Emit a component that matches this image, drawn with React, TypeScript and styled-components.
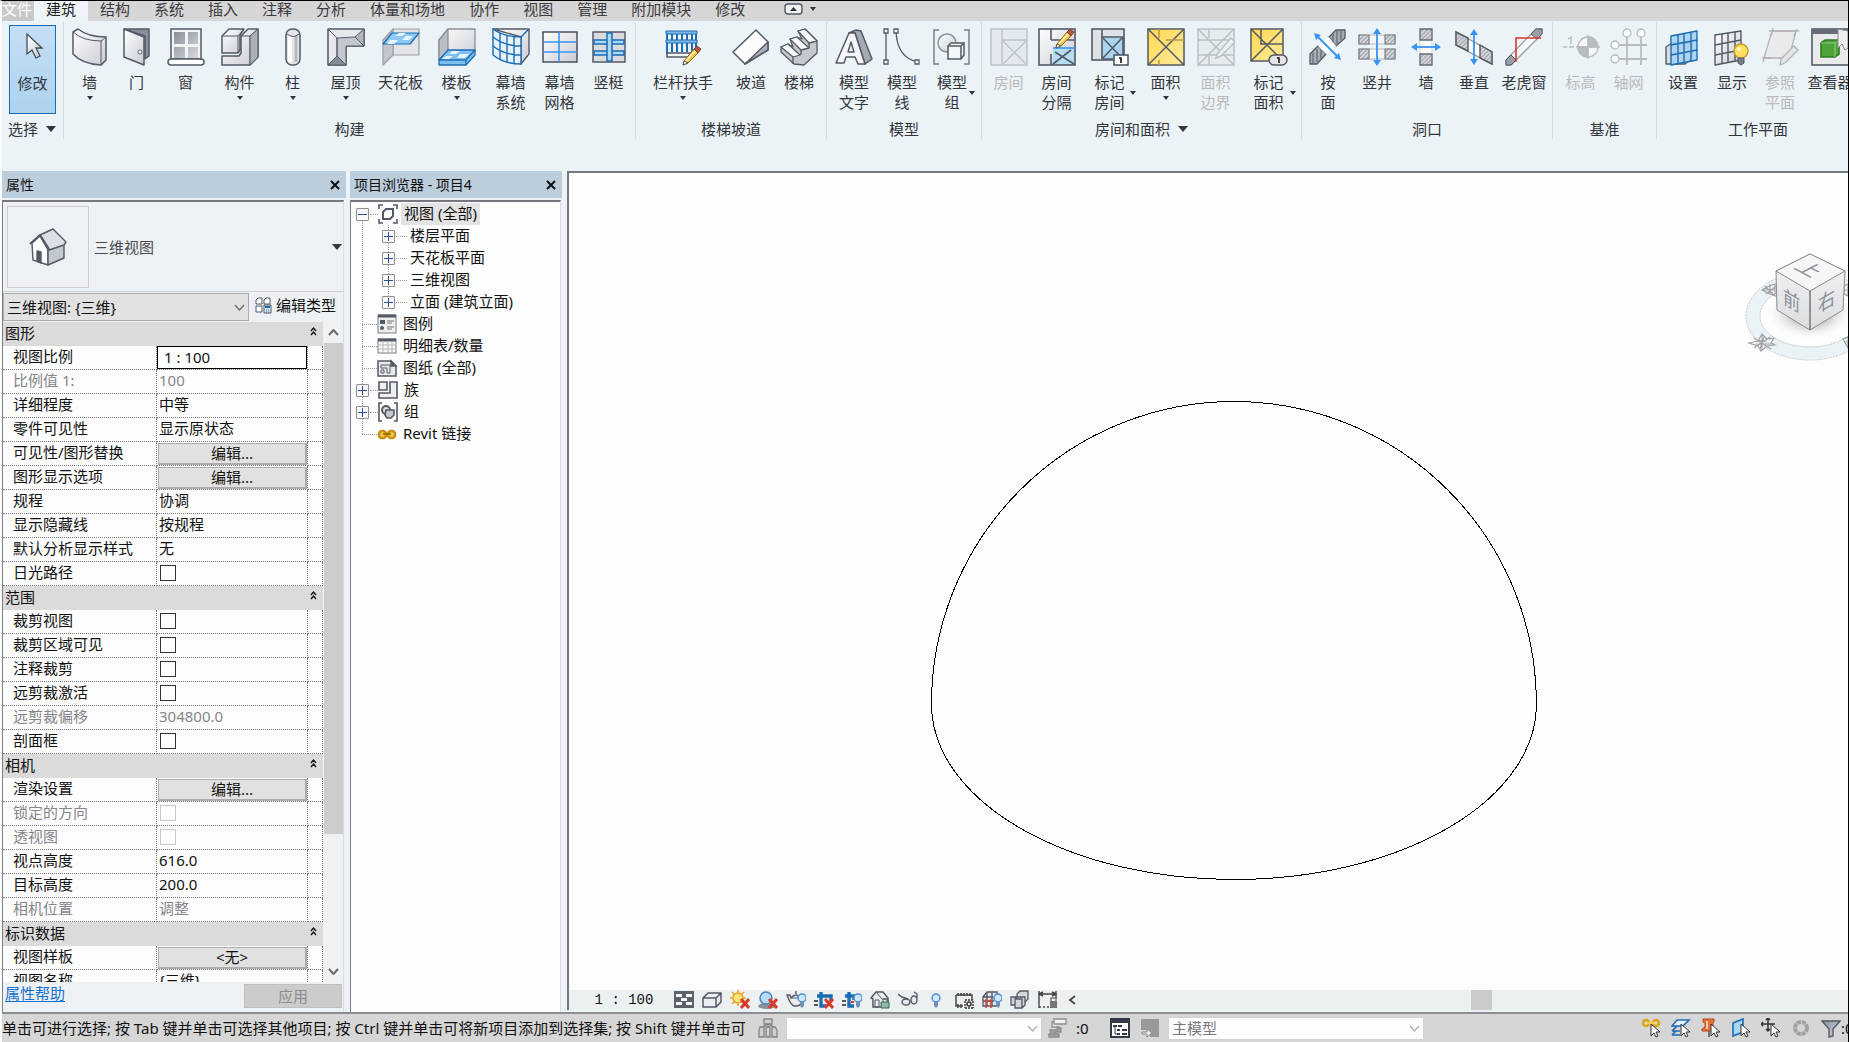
import React, { ReactNode } from 'react';
import styled, { createGlobalStyle, css } from 'styled-components';

const ink = '#535a66';
const blue = '#1c6cb4';
const sky = '#3794f5';

const GlobalStyle = createGlobalStyle`
  *, *::before, *::after { box-sizing: border-box; }
  html, body { margin: 0; padding: 0; }
  body, button, input, select {
    font-family: "Noto Sans", "Noto Sans CJK SC", sans-serif;
    font-size: 15px;
    line-height: 20px;
    color: #111;
  }
  button { margin: 0; padding: 0; border: 0; background: none; }
  svg { display: block; }
`;

/* ---------- shell ---------- */

const Shell = styled.div`
  display: flex;
  flex-direction: column;
  height: 100vh;
  overflow: hidden;
  border-top: 1px solid #000;
  border-right: 1px solid #000;
  border-left: 2px solid #fdfdfd;
  background: #ecf2f5;
  white-space: nowrap;
`;

const TabBar = styled.nav`
  display: flex;
  flex: none;
  height: 20px;
  background: #d6d6d6;
`;

const Tab = styled.button<{ $kind?: 'active' | 'file' }>`
  flex: none;
  padding: 0 12px 4px;
  height: 20px;
  line-height: 16px;
  color: #3a3a40;
  ${p => p.$kind === 'active' && css`background: #eef4f7; color: #222;`}
  ${p => p.$kind === 'file' && css`background: #c9c9c9; color: #fff; padding-left: 0; padding-right: 2px;`}
`;

const TabToggle = styled.button`
  display: flex;
  align-items: center;
  gap: 7px;
  height: 16px;
  margin-left: 27px;
`;

/* ---------- ribbon ---------- */

const Ribbon = styled.div`
  display: flex;
  flex: none;
  height: 150px;
  padding-top: 1px;
  background: #ebf3f6;
  overflow: hidden;
`;

const Panel = styled.section<{ $width: number }>`
  display: flex;
  flex-direction: column;
  flex: none;
  width: ${p => p.$width}px;
  height: 117px;
  border-right: 1px solid #d9dadd;
  &:last-child { border-right: 0; }
`;

const Tools = styled.div`
  display: flex;
  flex: 1;
  justify-content: center;
`;

const Tool = styled.button<{ $width: number; $off?: boolean }>`
  position: relative;
  display: flex;
  flex: none;
  flex-direction: column;
  align-items: center;
  width: ${p => p.$width}px;
  padding-top: 6px;
  color: ${p => (p.$off ? '#b9b9bd' : '#33353c')};
  svg { flex: none; }
`;

const ModifyTool = styled(Tool)`
  height: 89px;
  margin-top: 3px;
  padding-top: 3px;
  border: 1px solid #1c69b4;
  background: linear-gradient(#c5def5, #b9d9f2 50%, #add2ee);
`;

const ToolLabel = styled.span<{ $lines: number }>`
  height: ${p => p.$lines * 20}px;
  margin: 6px 0 4px;
  white-space: pre;
  text-align: center;
`;

const Caret = styled.i<{ $size?: number }>`
  display: block;
  flex: none;
  width: 0;
  height: 0;
  border: solid transparent;
  border-width: ${p => p.$size ?? 3}px;
  border-top-color: #33353c;
  border-bottom: 0;
  border-top-width: ${p => (p.$size ?? 3) + 1}px;
`;

const SideCaret = styled(Caret)`
  position: absolute;
  right: 3px;
  top: 69px;
`;

const PanelTitle = styled.div<{ $start?: boolean }>`
  display: flex;
  flex: none;
  align-items: center;
  justify-content: ${p => (p.$start ? 'flex-start' : 'center')};
  gap: 8px;
  height: 20px;
  padding-left: ${p => (p.$start ? 6 : 0)}px;
  color: #33353c;
`;

/* ---------- docked panes ---------- */

const Work = styled.main`
  display: flex;
  flex: 1;
  min-height: 0;
`;

const Dock = styled.section<{ $width: number; $gap: number }>`
  display: flex;
  flex-direction: column;
  flex: none;
  width: ${p => p.$width}px;
  margin-right: ${p => p.$gap}px;
`;

const DockTitle = styled.header`
  display: flex;
  flex: none;
  align-items: center;
  justify-content: space-between;
  height: 27px;
  margin-bottom: 2px;
  padding: 0 6px 0 4px;
  background: #bccddc;
  font-size: 14px;
`;

const DockBody = styled.div<{ $white?: boolean }>`
  display: flex;
  flex-direction: column;
  flex: 1;
  min-height: 0;
  margin-right: ${p => (p.$white ? 1 : 2)}px;
  border-top: 2px solid #74777c;
  border-left: 1px solid #7c7f84;
  border-right: 1px solid #dcdcdc;
  background: ${p => (p.$white ? '#fdfdfd' : '#eef1f3')};
`;

const TypeRow = styled.button`
  display: flex;
  flex: none;
  align-items: center;
  height: 90px;
  padding: 0 1px 0 4px;
  border-bottom: 1px solid #cfcfd4;
  text-align: left;
  color: #4a4a50;
`;

const TypeThumb = styled.span`
  display: grid;
  place-items: center;
  width: 82px;
  height: 82px;
  margin-right: 5px;
  border: 1px solid #cbcbd0;
`;

const Grow = styled.span`
  flex: 1;
`;

const InstanceRow = styled.div`
  display: flex;
  flex: none;
  align-items: center;
  gap: 6px;
  height: 30px;
`;

const Picker = styled.div<{ $width: number; $height: number; $tone: 'gray' | 'white' }>`
  position: relative;
  flex: none;
  width: ${p => p.$width}px;
  height: ${p => p.$height}px;
  select {
    appearance: none;
    width: 100%;
    height: 100%;
    padding: 0 3px;
    border: 1px solid ${p => (p.$tone === 'gray' ? '#acacac' : '#d2d2d2')};
    border-radius: 0;
    background: ${p => (p.$tone === 'gray' ? '#e2e2e2' : '#fdfdfd')};
    color: ${p => (p.$tone === 'gray' ? '#111' : '#77777c')};
    opacity: 1;
  }
  svg {
    position: absolute;
    right: 4px;
    top: 50%;
    margin-top: -3px;
    pointer-events: none;
  }
`;

const EditType = styled.button`
  display: flex;
  align-items: center;
  gap: 4px;
  padding-bottom: 4px;
`;

const GridArea = styled.div`
  display: flex;
  flex: 1;
  min-height: 0;
`;

const TableClip = styled.div`
  flex: none;
  width: 320px;
  overflow: hidden;
  background: #fdfdfd;
`;

const PropTable = styled.table`
  width: 320px;
  table-layout: fixed;
  border-collapse: separate;
  border-spacing: 0;
  tr { height: 24px; }
  td, th {
    height: 24px;
    padding: 0;
    font-weight: normal;
    text-align: left;
    line-height: 18px;
    vertical-align: middle;
    overflow: hidden;
  }
`;

const GroupHead = styled.th`
  background: #dbdbdb;
  div {
    display: flex;
    justify-content: space-between;
    align-items: center;
    padding: 0 5px 2px 2px;
  }
`;

const NameCell = styled.th<{ $off?: boolean }>`
  && { padding-left: 10px; padding-bottom: 4px; }
  border-right: 1px dotted #777;
  border-bottom: 1px dotted #777;
  color: ${p => (p.$off ? '#85858a' : '#111')};
`;

const cellBottom = { text: 4, check: 2, input: 0, button: 0 };

const ValueCell = styled.td<{ $off?: boolean; $kind: keyof typeof cellBottom }>`
  && {
    padding-left: ${p => (p.$kind === 'text' ? 2 : 0)}px;
    padding-bottom: ${p => cellBottom[p.$kind]}px;
  }
  border-right: 1px dotted #777;
  border-bottom: 1px dotted #777;
  color: ${p => (p.$off ? '#85858a' : '#111')};
`;

const LinkCell = styled.td`
  border-right: 1px dotted #777;
  border-bottom: 1px dotted #777;
`;

const ScaleInput = styled.input`
  display: block;
  width: 100%;
  height: 23px;
  padding: 0 6px 2px;
  border: 1px solid #000;
  background: #fff;
`;

const CellButton = styled.button`
  display: block;
  width: 149px;
  height: 22px;
  margin-left: 1px;
  border: 1px solid #acacac;
  border-right-width: 2px;
  border-bottom-width: 2px;
  background: #e1e1e1;
  line-height: 18px;
`;

const Tick = styled.input`
  appearance: none;
  display: block;
  width: 16px;
  height: 16px;
  margin: 0 0 0 3px;
  border: 1px solid #333;
  background: #fff;
  &:disabled { border-color: #c8c8c8; }
`;

const Scroll = styled.div`
  display: flex;
  flex: 1;
  flex-direction: column;
  align-items: center;
  justify-content: space-between;
  background: #f0f1f2;
`;

const ScrollButton = styled.button`
  display: grid;
  place-items: center;
  width: 20px;
  height: 21px;
`;

const ScrollTrack = styled.div`
  display: flex;
  flex: 1;
  flex-direction: column;
  width: 19px;
  &::before { content: ''; flex: 31; background: #cdcdcd; }
  &::after { content: ''; flex: 8; }
`;

const DockFoot = styled.footer`
  display: flex;
  flex: none;
  align-items: flex-start;
  justify-content: space-between;
  height: 30px;
  padding: 2px 1px 0 2px;
  background: #eef1f3;
  line-height: 18px;
  a { color: #1270d4; text-underline-offset: 2px; }
`;

const Apply = styled.button`
  width: 98px;
  height: 24px;
  border: 1px solid #c0c0c0;
  background: #cccccc;
  color: #8a8a8e;
`;

/* ---------- project browser ---------- */

const Branch = styled.ul<{ $nested?: boolean }>`
  position: relative;
  margin: 0;
  padding: 0 0 0 ${p => (p.$nested ? 26 : 5)}px;
  list-style: none;
  &::before {
    content: '';
    position: absolute;
    left: ${p => (p.$nested ? 32 : 11)}px;
    top: ${p => (p.$nested ? 0 : 18)}px;
    bottom: 11px;
    border-left: 1px dotted #999;
  }
`;

const BrowserTree = styled.div`
  padding-top: 1px;
`;

const Node = styled.div`
  display: flex;
  align-items: center;
  height: 22px;
`;

const Fold = styled.button`
  position: relative;
  display: grid;
  place-items: center;
  flex: none;
  width: 13px;
  height: 13px;
  border: 1px solid #8f8f8f;
  border-radius: 1px;
  background: #f8f8f8;
`;

const Stub = styled.span<{ $leaf?: boolean; $wide?: boolean }>`
  flex: none;
  width: ${p => (p.$leaf ? 15 : p.$wide ? 11 : 8)}px;
  margin-left: ${p => (p.$leaf ? 6 : 1)}px;
  border-top: 1px dotted #999;
`;

const NodeName = styled.span<{ $picked?: boolean; $plain?: boolean }>`
  height: 22px;
  padding: 0 3px;
  margin-left: ${p => (p.$plain ? 0 : 3)}px;
  line-height: 20px;
  background: ${p => (p.$picked ? '#e3e3e3' : 'none')};
`;

/* ---------- drawing view ---------- */

const View = styled.section`
  position: relative;
  display: flex;
  flex: 1;
  flex-direction: column;
  min-width: 0;
  margin-bottom: 2px;
  border-top: 2px solid #74777c;
  border-left: 2px solid #74777c;
  background: #fdfdfd;
`;

const Canvas = styled.div`
  flex: 1;
  min-height: 0;
  svg { width: 100%; height: 100%; }
`;

const CubeSpot = styled.div`
  position: absolute;
  right: 0;
  top: 72px;
`;

const ViewBar = styled.div`
  display: flex;
  flex: none;
  align-items: center;
  height: 20px;
  background: #edf0f1;
`;

const ScaleText = styled.button`
  width: 80px;
  margin-left: 15px;
  font-family: "Liberation Mono", monospace;
  font-size: 14px;
`;

const ViewTools = styled.div`
  display: flex;
  gap: 8px;
  margin-left: 10px;
`;

const IconButton = styled.button<{ $slim?: boolean }>`
  display: grid;
  place-items: center;
  flex: none;
  width: ${p => (p.$slim ? 12 : 20)}px;
  height: 20px;
`;

const HScroll = styled.div`
  display: flex;
  flex: 1;
  height: 20px;
  &::before { content: ''; width: 51%; }
  &::after { content: ''; width: 21px; background: #cbcbcb; }
`;

/* ---------- status bar ---------- */

const Status = styled.footer`
  display: flex;
  flex: none;
  align-items: center;
  height: 30px;
  border-top: 2px solid #8d8d90;
  background: #d6d6d6;
  overflow: hidden;
`;

const Hint = styled.span`
  flex: none;
  width: 756px;
  overflow: hidden;
`;

const Count = styled.span<{ $edge?: boolean }>`
  flex: none;
  width: ${p => (p.$edge ? 7 : 22)}px;
  padding-left: ${p => (p.$edge ? 0 : 4)}px;
`;

const StatusGroup = styled.div<{ $before: number; $after: number }>`
  display: flex;
  flex: none;
  gap: 10px;
  margin: 0 ${p => p.$after}px 0 ${p => p.$before}px;
`;

const StatusTools = styled.div`
  display: flex;
  flex: none;
  gap: 10px;
  margin-left: auto;
`;

/* ---------- icons ---------- */

const HiddenDefs = styled.svg`
  position: absolute;
`;

const Defs = () => (
  <HiddenDefs width="0" height="0" aria-hidden="true">
    <defs>
      <linearGradient id="steel" x1="0" y1="0" x2="1" y2="1">
        <stop offset="0" stopColor="#ffffff" />
        <stop offset="1" stopColor="#c9ccd3" />
      </linearGradient>
      <linearGradient id="dark" x1="0" y1="0" x2="1" y2="1">
        <stop offset="0" stopColor="#8a919c" />
        <stop offset="1" stopColor="#d5d8dd" />
      </linearGradient>
      <linearGradient id="gold" x1="0" y1="0" x2="1" y2="1">
        <stop offset="0" stopColor="#ffd84f" />
        <stop offset="1" stopColor="#ffea9c" />
      </linearGradient>
      <linearGradient id="cubeFace" x1="0" y1="0" x2="0" y2="1">
        <stop offset="0" stopColor="#f4f4f4" />
        <stop offset="1" stopColor="#dcdde0" />
      </linearGradient>
      <radialGradient id="cubeShade">
        <stop offset="0.4" stopColor="#bdbdbd" />
        <stop offset="1" stopColor="#fdfdfd" stopOpacity="0" />
      </radialGradient>
      <pattern id="hatch" width="3" height="3" patternUnits="userSpaceOnUse" patternTransform="rotate(45)">
        <rect width="3" height="3" fill="#d3d5d9" />
        <path d="M0 0V3" stroke="#83878f" strokeWidth="1.4" />
      </pattern>
    </defs>
  </HiddenDefs>
);

const Pencil = ({ x = 0, y = 0 }: { x?: number; y?: number }) => (
  <g transform={`translate(${x} ${y})`} strokeWidth="1" strokeLinejoin="round">
    <path d="M1 15 11 3 15 7 5 17 0 19Z" fill="#f5bd3c" stroke="#8f6a22" />
    <path d="M3 15 13 4" stroke="#ffe9a8" strokeWidth="2" />
    <path d="M11 3 14 0 18 3 15 7Z" fill="#b5583a" stroke="#7c4632" />
    <path d="M1 15 5 17 0 19Z" fill="#fff" stroke="#555" />
  </g>
);

const tools: Record<string, ReactNode> = {
  modify: <path d="M13 5V25L18 21 22 29 26 27 22 19H28Z" fill="url(#steel)" stroke="#444b58" strokeWidth="1.3" />,
  wall: (
    <g fill="url(#steel)" stroke={ink} strokeWidth="1.5" strokeLinejoin="round">
      <path d="M2 4 7 1Q17 9 35 9V32L30 37Q11 36 2 26Z" />
      <path d="M2 4Q12 13 30 13L35 9M30 13V37" fill="none" strokeWidth="1" />
    </g>
  ),
  door: (
    <g stroke={ink} strokeWidth="1.5" strokeLinejoin="round">
      <path d="M6 1H31V28L27 31V8Z" fill="#89909b" />
      <path d="M6 1 26 9V37L6 29Z" fill="url(#steel)" />
      <circle cx="22" cy="24" r="2" fill="#fff" strokeWidth="1" />
    </g>
  ),
  window: (
    <g stroke={ink} strokeWidth="1.5">
      <path d="M4 1H34V31H4Z" fill="#f2f3f5" />
      <path d="M7 4H18V16H7ZM21 4H31V16H21ZM7 19H18V30H7ZM21 19H31V30H21Z" fill="url(#dark)" stroke="none" />
      <rect x="1" y="31" width="36" height="6" rx="3" fill="#fff" />
    </g>
  ),
  component: (
    <g fill="url(#steel)" stroke={ink} strokeWidth="1.5" strokeLinejoin="round">
      <path d="M1 8 8 1H23L19 7V22L17 25H1Z" />
      <path d="M1 8H17V25M17 8 23 1" fill="none" strokeWidth="1" />
      <path d="M20 8 27 1H37V29L29 37H1V28H18L20 25Z" />
      <path d="M20 8H29V37M29 8 37 1" fill="none" strokeWidth="1" />
      <path d="M29 8 37 1V29L29 37Z" fill="#a9aeb7" strokeWidth="1" />
    </g>
  ),
  column: (
    <g stroke={ink} strokeWidth="1.5">
      <rect x="12" y="1" width="14" height="36" rx="6" fill="#e3e5e8" />
      <path d="M16 8V34" stroke="#fff" strokeWidth="4" />
      <path d="M22 8V34" stroke="#b5b8bf" strokeWidth="3" />
      <path d="M13 6Q19 11 25 6" fill="none" strokeWidth="1" />
    </g>
  ),
  roof: (
    <g stroke={ink} strokeWidth="1.5" strokeLinejoin="round">
      <path d="M1 1H37V18H19V37H1Z" fill="#e6e8eb" />
      <path d="M10 10 28 9 37 18H19V37L10 28Z" fill="#c4c8ce" strokeWidth="1" />
      <path d="M1 1 10 10V28" fill="none" strokeWidth="1" />
      <path d="M1 37 10 28 19 37Z" fill="#858b96" strokeWidth="1" />
      <path d="M37 1 28 9 37 18Z" fill="#b1b5bd" strokeWidth="1" />
    </g>
  ),
  ceiling: (
    <g strokeWidth="1.2" strokeLinejoin="round">
      <path d="M11 1H37V27H11Z" fill="#e2e4e7" stroke="#9a9ea6" />
      <path d="M1 12 11 1V27L1 37Z" fill="#c3c6cc" stroke="#9a9ea6" />
      <path d="M10 5H37L28 16H1Z" fill="#8cc8f5" stroke={blue} />
      <path d="M13 8 17 5H24L20 8ZM24 8H31L27 12H20ZM8 12H16L12 16H5Z" fill="#e7f5fd" />
    </g>
  ),
  floor: (
    <g strokeWidth="1.3" strokeLinejoin="round">
      <path d="M10 1H37V23L30 32H1V12Z" fill="url(#steel)" stroke="#8b9099" />
      <path d="M1 12 10 1V23L1 32Z" fill="#b9bdc5" stroke="#8b9099" />
      <path d="M10 22H37V27L28 37H1V32Z" fill="#7fc0f2" stroke={blue} />
      <path d="M1 32H28L37 22M28 32V37" fill="none" stroke={blue} />
      <path d="M14 23H22L18 26H11ZM22 26H31L27 30H19ZM8 28H15L11 31H4Z" fill="#e7f5fd" />
    </g>
  ),
  curtain: (
    <g fill="none" strokeWidth="1.4" strokeLinejoin="round">
      <path d="M1 1H37V26L29 36V9Z" fill="url(#steel)" stroke={ink} />
      <path d="M1 1Q12 9 29 9V36Q12 36 1 27Z" fill="#e5f2fb" stroke={blue} />
      <path d="M1 9Q12 18 29 18M1 18Q12 27 29 27M8 5V32M15 8V35M22 9V36M29 9 37 1" stroke={blue} />
    </g>
  ),
  cgrid: (
    <g fill="none" strokeWidth="1.6">
      <rect x="2" y="4" width="34" height="30" fill="url(#steel)" stroke={ink} />
      <path d="M2 14H36M2 24H36M18 4V34" stroke={sky} />
    </g>
  ),
  mullion: (
    <g strokeWidth="1.5">
      <rect x="3" y="4" width="32" height="30" fill="#d9dbdf" stroke={ink} />
      <path d="M4 12H34V16H4ZM4 23H34V27H4Z" fill="#a8d8f5" stroke={blue} />
      <rect x="17" y="5" width="5" height="28" fill="#a8d8f5" stroke={blue} />
    </g>
  ),
  railing: (
    <g strokeWidth="1.5">
      <path d="M3 4V26M8 6V24M13 6V24M18 6V24M23 6V24M28 6V24M32 3V20" stroke={blue} strokeWidth="2" />
      <path d="M2 3H33V6H2ZM2 12H33V15H2Z" fill="#7fb9ea" stroke={blue} strokeWidth="1" />
      <path d="M3 25H29V29H3Z" fill="#f7f7f7" stroke={ink} />
      <Pencil x={19} y={18} />
    </g>
  ),
  ramp: (
    <g stroke={ink} strokeWidth="1.5" strokeLinejoin="round">
      <path d="M1 24 24 2 36 14V22L13 36Z" fill="#fcfcfd" />
      <path d="M13 36 36 14V22Z" fill="#aeb3bb" />
    </g>
  ),
  stair: (
    <g stroke={ink} strokeWidth="1.3" strokeLinejoin="round">
      <path d="M1 19 8 16 13 19 10 11 17 9 22 11 18 3 25 1 37 13V25L24 37 14 36 1 24Z" fill="#c5c8ce" />
      <path d="M18 3 25 1 37 13 29 15ZM10 11 17 9 29 20 21 22ZM1 19 8 16 20 27 13 29Z" fill="#fbfbfc" />
      <path d="M29 15 29 20M21 22V27M13 29V36" />
    </g>
  ),
  mtext: (
    <g stroke={ink} strokeWidth="1.5" strokeLinejoin="round">
      <path d="M14 5 21 2 26 3 37 31 30 36 20 5Z" fill="#a5aab3" />
      <path d="M1 35 14 5H20L30 36H23L20 29H11L9 35ZM13 24H19L16 14Z" fill="#f5f5f7" fillRule="evenodd" />
    </g>
  ),
  mline: (
    <g fill="none" stroke={ink} strokeWidth="1.3">
      <path d="M3 3V34M13 3Q14 30 35 34" />
      <path d="M1 1H5V5H1ZM1 32H5V36H1ZM11 1H15V5H11ZM32 32H36V36H32Z" fill="#fff" />
    </g>
  ),
  mgroup: (
    <g fill="none" stroke={ink} strokeWidth="1.5">
      <path d="M6 2H1V36H6M31 2H36V36H31" stroke="#7b808a" />
      <circle cx="14" cy="15" r="9" fill="url(#steel)" stroke="#8b9099" />
      <path d="M15 18 18 15H31V27L28 31H15Z" fill="#f4f5f6" />
      <path d="M15 18H28V31M28 18 31 15" />
    </g>
  ),
  room: (
    <g fill="none" stroke={ink} strokeWidth="1.5" opacity=".3">
      <rect x="1" y="1" width="36" height="36" fill="#d5d5d9" />
      <path d="M12 1V37M12 12H37M13 13 36 36M36 13 13 36" />
    </g>
  ),
  roomsep: (
    <g fill="none" stroke={ink} strokeWidth="1.6">
      <rect x="1" y="1" width="36" height="36" fill="url(#steel)" />
      <path d="M15 20H36V36H15Z" fill="#b5dcf3" stroke="none" />
      <path d="M13 1V12M13 26V37M13 12H36M17 24 36 36M33 22 15 36" />
      <path d="M15 20H37" stroke={sky} />
      <Pencil x={18} y={1} />
    </g>
  ),
  tagroom: (
    <g fill="none" stroke={ink} strokeWidth="1.6">
      <rect x="1" y="1" width="32" height="31" fill="#dfe1e6" />
      <path d="M11 9H32V31H11Z" fill="#a9d5ef" />
      <path d="M11 1V9M12 10 31 30M31 10 12 30" />
      <rect x="23" y="27" width="14" height="10" fill="#fff" />
      <path d="M28 30H30V35" stroke="#111" />
    </g>
  ),
  area: (
    <g fill="none" stroke={ink} strokeWidth="1.5">
      <rect x="1" y="1" width="36" height="36" fill="url(#gold)" />
      <path d="M1 1 37 37M37 1 1 37" />
      <path d="M12 1V10M12 32V37M19 12H37" stroke="#b79b4c" />
    </g>
  ),
  areaedge: (
    <g fill="none" stroke={ink} strokeWidth="1.5" opacity=".32">
      <rect x="1" y="1" width="36" height="36" fill="#dcdce0" />
      <path d="M1 1 37 37M37 1 1 37M12 1V10M1 12H37M1 27H37M12 28V37" />
      <path d="M20 26 34 10 38 14 24 28 19 30Z" fill="#eee" />
    </g>
  ),
  tagarea: (
    <g fill="none" stroke={ink} strokeWidth="1.5">
      <rect x="1" y="1" width="32" height="32" fill="url(#gold)" />
      <path d="M1 1 33 33M33 1 1 33M11 1V17M11 16H33" />
      <rect x="19" y="27" width="18" height="10" rx="5" fill="#e4e4e6" />
      <path d="M27 30H29V35" stroke="#111" />
    </g>
  ),
  byface: (
    <g strokeWidth="1.3" strokeLinejoin="round">
      <path d="M1 36V26L9 18 17 26 8 36ZM20 9 27 2H36V10L27 18Z" fill="#a9adb5" stroke={ink} />
      <path d="M9 18 20 9 27 18 17 26Z" fill="#fff" />
      <path d="M4 25V35M8 21V34M12 22V31M24 6V14M28 3V16M32 3V12" stroke="#666c77" />
      <path d="M7 7 30 30" stroke={sky} strokeWidth="1.8" />
      <path d="M5 5 12 7 7 12ZM32 32 25 30 30 25Z" fill={sky} />
    </g>
  ),
  shaft: (
    <g strokeWidth="1.2">
      <path d="M1 7H37V16H1ZM1 21H37V31H1Z" fill="#f5f5f5" stroke="#bbb" />
      <path d="M1 7H11V16H1ZM27 7H37V16H27ZM1 21H11V31H1ZM27 21H37V31H27Z" fill="url(#hatch)" stroke="#777c86" />
      <path d="M19 3V35" stroke={sky} strokeWidth="1.8" />
      <path d="M19 0 23 6H15ZM19 38 23 32H15Z" fill={sky} />
    </g>
  ),
  wallopen: (
    <g strokeWidth="1.3">
      <rect x="13" y="1" width="12" height="36" fill="#fbfbfb" stroke="#ddd" />
      <path d="M13 1H25V12H13ZM13 26H25V37H13Z" fill="url(#hatch)" stroke="#666b76" />
      <path d="M7 19H31" stroke={sky} strokeWidth="1.8" />
      <path d="M4 19 10 15V23ZM34 19 28 15V23Z" fill={sky} />
    </g>
  ),
  vertical: (
    <g strokeWidth="1.4">
      <path d="M1 4 37 24V36L1 17Z" fill="#fafafa" stroke="#999" />
      <path d="M1 4 13 10V23L1 17ZM25 17 37 24V36L25 30Z" fill="url(#hatch)" stroke={ink} />
      <path d="M19 4V34" stroke={sky} strokeWidth="1.8" />
      <path d="M19 1 23 7H15ZM19 37 23 31H15Z" fill={sky} />
    </g>
  ),
  dormer: (
    <g strokeWidth="1.3">
      <path d="M1 37V32L31 1H37V6L6 37Z" fill="#f7f7f8" stroke="#9a9ea6" />
      <path d="M1 37V32L6 27 11 32 6 37ZM26 6 31 1H37V6L32 11Z" fill="#999ea7" stroke={ink} strokeWidth="1" />
      <path d="M11 34V10H36" fill="none" stroke="#d3392c" strokeWidth="1.6" />
    </g>
  ),
  level: (
    <g strokeWidth="1.3" opacity=".75" stroke="#a9a9ad" fill="none">
      <circle cx="26" cy="19" r="10" fill="#fafafa" />
      <path d="M26 19V9A10 10 0 0 1 36 19ZM26 19V29A10 10 0 0 1 16 19Z" fill="#a9a9ad" />
      <path d="M1 19H5M7 19H12M14 19H38M26 7V31M6 11 9 9V16" />
    </g>
  ),
  axis: (
    <g strokeWidth="1.3" opacity=".75" stroke="#a9a9ad" fill="none">
      <path d="M17 8V37M31 8V37M8 17H37M8 31H37" strokeWidth="1.8" />
      <circle cx="17" cy="5" r="4" fill="#fff" />
      <circle cx="31" cy="5" r="4" fill="#fff" />
      <circle cx="5" cy="17" r="4" fill="#fff" />
      <circle cx="5" cy="31" r="4" fill="#fff" />
    </g>
  ),
  setplane: (
    <g strokeWidth="1.4" strokeLinejoin="round" fill="none">
      <path d="M2 19 8 15H28V30L21 36H2Z" fill="#d9dce0" stroke={ink} />
      <path d="M7 8 33 3V32L7 37Z" fill="#a6d0f1" fillOpacity=".85" stroke={blue} />
      <path d="M14 7V36M20 6V34M27 5V33M7 17 33 12M7 27 33 22" stroke={blue} />
    </g>
  ),
  showplane: (
    <g strokeWidth="1.4" strokeLinejoin="round" fill="none">
      <path d="M2 7 28 3V32L2 37Z" fill="url(#steel)" stroke={ink} />
      <path d="M9 6V36M15 5V35M22 4V34M2 17 28 12M2 27 28 22" stroke={ink} />
      <circle cx="28" cy="23" r="7" fill="#ffdf5c" stroke="#c69a2d" />
      <path d="M25 30H31V35L28 37 25 35Z" fill="#777d87" stroke={ink} strokeWidth="1" />
      <circle cx="26" cy="21" r="2" fill="#fff6c9" />
    </g>
  ),
  refplane: (
    <g strokeWidth="1.3" strokeLinejoin="round" fill="none" stroke="#b3b3b8">
      <path d="M11 3H35L28 30H3Z" fill="#e9eaec" />
      <path d="M12 0 10 8M8 3H38M36 1 33 8M1 30H10M2 34 4 27" />
      <path d="M20 31 33 18 37 22 24 35 19 37Z" fill="#e4e5e7" />
    </g>
  ),
  viewer: (
    <g strokeWidth="1.6" fill="none">
      <rect x="1" y="1" width="37" height="36" fill="#e9eaec" stroke={ink} />
      <path d="M1 1H38V6H1Z" fill="#666c77" />
      <path d="M10 15 14 12H28V26L24 29H10Z" fill="#4fa33a" stroke="#2f7a22" />
      <path d="M10 15H24V29M24 15 28 12" stroke="#8fd07c" strokeWidth="1" />
      <path d="M27 1V20L31 16 34 22 37 20V3Z" fill="#eee" stroke="#888" strokeWidth="1" />
    </g>
  ),
};

const RedX = () => <path d="M11 9 19 18M19 9 11 18" stroke="#d93a2c" strokeWidth="3" />;
const Bulb = ({ x = 0 }: { x?: number }) => (
  <g transform={`translate(${x} 0)`}>
    <circle cx="15" cy="8" r="4" fill="#cfe7fb" stroke="#4b8fd6" strokeWidth="1.5" />
    <path d="M13 12H17V16L15 18 13 16Z" fill="#6f91b5" />
  </g>
);

function Pointer() {
  return <path d="M10 6V18L13 15 15 19 17 18 15 14H19Z" fill="#fff" stroke="#333" strokeWidth="1" />;
}

const small: Record<string, ReactNode> = {
  detail: <g><path d="M0 1H20V18H0Z" fill="#5b616b" /><path d="M2 4H8V7H2ZM12 4H18V7H12ZM7 8H13V11H7ZM2 12H8V15H2ZM12 12H18V15H12Z" fill="#f4f4f4" /></g>,
  style: <path d="M1 8 6 3H19V12L14 17H1ZM1 8H14L19 3M14 8V17" fill="#eeeff1" stroke={ink} strokeWidth="1.5" />,
  sun: <g><path d="M8 0V16M0 8H16M2 2 14 14M14 2 2 14" stroke="#e7a52a" strokeWidth="1.6" /><circle cx="8" cy="8" r="5" fill="#ffe27a" stroke="#e7a52a" strokeWidth="1.5" /><RedX /></g>,
  shadow: <g><ellipse cx="9" cy="16" rx="9" ry="3" fill="#8a8f97" /><circle cx="8" cy="8" r="6" fill="#b7dcf8" stroke="#4d86be" strokeWidth="1.5" /><RedX /></g>,
  teapot: <g><path d="M5 8Q10 2 15 8Q17 15 11 16H8Q4 14 1 5H4ZM10 4V1" fill="#eee" stroke={ink} strokeWidth="1.4" /><path d="M6 8H14" stroke={ink} /><Bulb x={1} /></g>,
  cropx: <g><path d="M3 6H17V11M7 2V16H12" fill="none" stroke={blue} strokeWidth="3.4" /><path d="M0 11H4M0 15H4" stroke="#555" strokeWidth="2" /><RedX /></g>,
  cropb: <g><path d="M3 6H12V10M7 2V16H12" fill="none" stroke={blue} strokeWidth="3.4" /><path d="M0 11H4M0 15H4" stroke="#555" strokeWidth="2" /><path d="M9 12H12" stroke="#d93a2c" strokeWidth="2" /><Bulb x={1} /></g>,
  lock3d: <g><path d="M1 8 6 2H13L18 8V17H3V9Z" fill="#eceded" stroke={ink} strokeWidth="1.5" /><path d="M5 10H9V17H5ZM6 2 12 9H18" fill="none" stroke={ink} /><path d="M11 12H19V18H11Z" fill="#8fb8ab" stroke="#3f6259" /><path d="M13 12V9H17V12" fill="none" stroke="#3f6259" /></g>,
  glasses: <g fill="#dfeaf2" stroke={ink} strokeWidth="1.4"><path d="M0 4 4 7 10 9M16 2 19 4V8" fill="none" /><ellipse cx="8" cy="12" rx="4" ry="3" /><ellipse cx="16" cy="10" rx="3" ry="4" /></g>,
  reveal: <Bulb x={-5} />,
  template: <g><path d="M2 5H18V10M2 5V16H9M4 3V6M7 3V6M10 3V6M13 3V6M16 3V6M4 14V18M7 14V18" fill="none" stroke="#444" strokeWidth="1.5" /><path d="M11 11V18M19 11V18M11 10H19M11 18H19" stroke="#333" strokeDasharray="2 1" strokeWidth="1.4" /><circle cx="15" cy="14" r="2" stroke="#333" strokeWidth="1.5" /></g>,
  analysis: <g><path d="M1 7 5 2H15V16H1ZM1 7H11M5 2V16M10 2V16M1 11H12" fill="#e2e3e5" stroke={ink} strokeWidth="1.3" /><path d="M4 9V18M9 9V18M4 11H9" stroke="#c84a3a" strokeWidth="1.6" /><Bulb x={1} /></g>,
  displace: <g fill="#d4d6da" stroke={ink} strokeWidth="1.3"><path d="M7 4 10 1H18V9L15 12H7Z" /><path d="M1 7H6V15H1Z" /><path d="M5 9 7 7H15V15L12 18H5ZM5 9H12V18" /></g>,
  constraint: <g><path d="M1 1V18M18 1V9M1 4H18M5 2 1 4 5 6M14 2 18 4 14 6" stroke="#444" fill="none" strokeWidth="1.4" /><path d="M1 17H11" stroke="#444" strokeDasharray="2 2" strokeWidth="1.4" /><path d="M12 11H19V18H12Z" fill="#777" /><path d="M13 11V8H18V11" fill="none" stroke="#777" strokeWidth="1.4" /></g>,
  worksets: <g fill="#cfcfd0" stroke="#838386" strokeWidth="1.3"><path d="M6 1H14V6H6Z" /><path d="M10 6V9M4 9 10 6 16 9" /><path d="M2 9H6V19H1V12ZM8 9H12V19H8ZM14 9H17L19 12V19H14Z" /></g>,
  editable: <g fill="#f1f1f1" stroke="#8d8d90" strokeWidth="1.3"><path d="M6 1H18V6H6ZM6 4H4V9H11V12" /><path d="M9 10H13V14H9Z" fill="#a0a0a2" /><path d="M2 12H8V15H6V16H11V19H1V16H3Z" fill="#a0a0a2" /></g>,
  options: <g><path d="M1 1H19V19H1Z" fill="#fff" stroke="#333946" strokeWidth="2" /><path d="M1 3H19" stroke="#333946" strokeWidth="4" /><path d="M3 8H7M8 8H12M7 12H10M12 12H17M7 16H10M12 16H17" stroke="#333946" strokeWidth="2" /><path d="M5 9V16H7" stroke="#333946" /></g>,
  addset: <g><path d="M1 1H19V19H10V12H1Z" fill="#999a98" /><path d="M2 14H7V11L12 15 7 19V16H2Z" fill="#eee" stroke="#888" /></g>,
  pickLink: <g><circle cx="5" cy="5" r="3" stroke="#dda514" strokeWidth="2.6" /><circle cx="15" cy="5" r="3" stroke="#dda514" strokeWidth="2.6" /><path d="M6 5H14" stroke="#f3cf4a" strokeWidth="2.4" /><Pointer /></g>,
  pickUnder: <g><path d="M6 2H18L12 8H1ZM1 8 12 8M1 13 6 8M1 13H9M1 17H9M1 17 5 13" fill="#e6f2fb" stroke={blue} strokeWidth="1.6" /><Pointer /></g>,
  pickPin: <g><path d="M2 1H13V4L12 5V9L15 11V13H1V11L4 9V5L2 4Z" fill="#e6703a" stroke="#b04a1c" /><path d="M6 3V11" stroke="#f9c9a8" strokeWidth="2" /><path d="M8 13V19" stroke="#555" strokeWidth="1.5" /><Pointer /></g>,
  pickFace: <g><path d="M2 5 12 1V14L2 18Z" fill="#a9d6f5" stroke={blue} strokeWidth="1.6" /><Pointer /></g>,
  dragPick: <g><path d="M7 0V13M0 6H14M5 2 7 0 9 2M5 11 7 13 9 11M2 4 0 6 2 8" fill="none" stroke="#333" strokeWidth="1.5" /><Pointer /></g>,
  gear: <circle cx="10" cy="10" r="6" fill="none" stroke="#a2a2a2" strokeWidth="4" strokeDasharray="4 0.7" />,
  filter: <path d="M1 3H19L12 11V18L8 19V11Z" fill="url(#dark)" stroke={ink} strokeWidth="1.4" />,
  views: <g fill="none" stroke={ink} strokeWidth="1.6"><path d="M5 1H1V5M15 1H19V5M1 15V19H5M19 15V19H15" /><path d="M5 8 8 5H15V12L12 15H5Z" strokeWidth="2" /></g>,
  legend: <g><rect x="1" y="1" width="18" height="18" fill="#eee" stroke="#777c86" /><path d="M1 2H19" stroke={ink} strokeWidth="3" /><path d="M3 6H8V10H3Z" fill={ink} /><circle cx="5" cy="14" r="2" fill={ink} /><path d="M10 7H17M10 9H15M10 13H17M10 15H15" stroke="#777" /></g>,
  schedule: <g><rect x="1" y="3" width="18" height="14" fill="#f6f6f6" stroke="#777c86" /><path d="M1 4H19" stroke={ink} strokeWidth="3" /><path d="M1 9H19M1 13H19M6 5V17M11 5V17M15 5V17" stroke="#b8b8b8" /></g>,
  sheets: <g fill="#e8e9eb" stroke={ink} strokeWidth="1.5"><path d="M1 3H14L19 8V18H1Z" /><path d="M4 7H13V15H10V10H4ZM4 12H7V15H4Z" strokeWidth="1" /><path d="M14 3V8H19Z" fill={ink} /></g>,
  family: <g fill="#eee" stroke={ink} strokeWidth="1.6"><path d="M1 2H9V10H1Z" /><path d="M12 2H19V18H1V13H12Z" /></g>,
  group: <g fill="none" stroke={ink} strokeWidth="1.6"><path d="M4 1H1V19H4M16 1H19V19H16" /><circle cx="8" cy="8" r="4" fill="#ddd" strokeWidth="2" /><path d="M7 13 8 8H16V13L13 16H9Z" fill="#c6c9ce" /></g>,
  link: <g fill="#f6cf5a" stroke="#c98f12" strokeWidth="2.6"><rect x="2" y="7" width="7" height="7" rx="3" /><rect x="11" y="7" width="7" height="7" rx="3" /><path d="M6 10H14" stroke="#a87408" strokeWidth="2" /></g>,
};

const Small = ({ name }: { name: string }) => (
  <svg width="20" height="20" viewBox="0 0 20 20" fill="none" aria-hidden="true">{small[name]}</svg>
);

const Chevron = ({ color = '#6a6a6e', up }: { color?: string; up?: boolean }) => (
  <svg width="11" height="7" viewBox="0 0 11 7" fill="none" aria-hidden="true">
    <path d={up ? 'M1 6 5.5 1 10 6' : 'M1 1 5.5 6 10 1'} stroke={color} strokeWidth={up === undefined ? 1.2 : 2} />
  </svg>
);

const Cross = () => (
  <svg width="10" height="10" viewBox="0 0 10 10" aria-hidden="true">
    <path d="M1 1 9 9M9 1 1 9" stroke="#111" strokeWidth="2" />
  </svg>
);

/* ---------- data ---------- */

interface ToolItem { label: string; icon: string; width: number; menu?: 'below' | 'side'; off?: boolean }
interface PanelItem { title: string; width: number; menu?: boolean; items: ToolItem[] }

const tabs = ['建筑', '结构', '系统', '插入', '注释', '分析', '体量和场地', '协作', '视图', '管理', '附加模块', '修改'];

const panels: PanelItem[] = [
  { title: '构建', width: 572, items: [
    { label: '墙', icon: 'wall', width: 48, menu: 'below' },
    { label: '门', icon: 'door', width: 46 },
    { label: '窗', icon: 'window', width: 52 },
    { label: '构件', icon: 'component', width: 56, menu: 'below' },
    { label: '柱', icon: 'column', width: 50, menu: 'below' },
    { label: '屋顶', icon: 'roof', width: 56, menu: 'below' },
    { label: '天花板', icon: 'ceiling', width: 54 },
    { label: '楼板', icon: 'floor', width: 58, menu: 'below' },
    { label: '幕墙\n系统', icon: 'curtain', width: 50 },
    { label: '幕墙\n网格', icon: 'cgrid', width: 48 },
    { label: '竖梃', icon: 'mullion', width: 50 },
  ] },
  { title: '楼梯坡道', width: 191, items: [
    { label: '栏杆扶手', icon: 'railing', width: 84, menu: 'below' },
    { label: '坡道', icon: 'ramp', width: 52 },
    { label: '楼梯', icon: 'stair', width: 44 },
  ] },
  { title: '模型', width: 155, items: [
    { label: '模型\n文字', icon: 'mtext', width: 48 },
    { label: '模型\n线', icon: 'mline', width: 48 },
    { label: '模型\n组', icon: 'mgroup', width: 52, menu: 'side' },
  ] },
  { title: '房间和面积', width: 320, menu: true, items: [
    { label: '房间', icon: 'room', width: 48, off: true },
    { label: '房间\n分隔', icon: 'roomsep', width: 48 },
    { label: '标记\n房间', icon: 'tagroom', width: 58, menu: 'side' },
    { label: '面积', icon: 'area', width: 54, menu: 'below' },
    { label: '面积\n边界', icon: 'areaedge', width: 46, off: true },
    { label: '标记\n面积', icon: 'tagarea', width: 60, menu: 'side' },
  ] },
  { title: '洞口', width: 251, items: [
    { label: '按\n面', icon: 'byface', width: 48 },
    { label: '竖井', icon: 'shaft', width: 50 },
    { label: '墙', icon: 'wallopen', width: 48 },
    { label: '垂直', icon: 'vertical', width: 48 },
    { label: '老虎窗', icon: 'dormer', width: 52 },
  ] },
  { title: '基准', width: 104, items: [
    { label: '标高', icon: 'level', width: 48, off: true },
    { label: '轴网', icon: 'axis', width: 48, off: true },
  ] },
  { title: '工作平面', width: 202, items: [
    { label: '设置', icon: 'setplane', width: 48 },
    { label: '显示', icon: 'showplane', width: 50 },
    { label: '参照\n平面', icon: 'refplane', width: 46, off: true },
    { label: '查看器', icon: 'viewer', width: 54 },
  ] },
];

type Prop = { name: string; kind: 'input' | 'text' | 'button' | 'check'; value?: string; off?: boolean };

const groups: { title: string; rows: Prop[] }[] = [
  { title: '图形', rows: [
    { name: '视图比例', kind: 'input', value: '1 : 100' },
    { name: '比例值 1:', kind: 'text', value: '100', off: true },
    { name: '详细程度', kind: 'text', value: '中等' },
    { name: '零件可见性', kind: 'text', value: '显示原状态' },
    { name: '可见性/图形替换', kind: 'button', value: '编辑...' },
    { name: '图形显示选项', kind: 'button', value: '编辑...' },
    { name: '规程', kind: 'text', value: '协调' },
    { name: '显示隐藏线', kind: 'text', value: '按规程' },
    { name: '默认分析显示样式', kind: 'text', value: '无' },
    { name: '日光路径', kind: 'check' },
  ] },
  { title: '范围', rows: [
    { name: '裁剪视图', kind: 'check' },
    { name: '裁剪区域可见', kind: 'check' },
    { name: '注释裁剪', kind: 'check' },
    { name: '远剪裁激活', kind: 'check' },
    { name: '远剪裁偏移', kind: 'text', value: '304800.0', off: true },
    { name: '剖面框', kind: 'check' },
  ] },
  { title: '相机', rows: [
    { name: '渲染设置', kind: 'button', value: '编辑...' },
    { name: '锁定的方向', kind: 'check', off: true },
    { name: '透视图', kind: 'check', off: true },
    { name: '视点高度', kind: 'text', value: '616.0' },
    { name: '目标高度', kind: 'text', value: '200.0' },
    { name: '相机位置', kind: 'text', value: '调整', off: true },
  ] },
  { title: '标识数据', rows: [
    { name: '视图样板', kind: 'button', value: '<无>' },
    { name: '视图名称', kind: 'text', value: '{三维}' },
  ] },
];

interface TreeItem { name: string; icon?: string; fold?: 'open' | 'shut'; picked?: boolean; children?: TreeItem[] }

const tree: TreeItem[] = [
  { name: '视图 (全部)', icon: 'views', fold: 'open', picked: true, children: [
    { name: '楼层平面', fold: 'shut' },
    { name: '天花板平面', fold: 'shut' },
    { name: '三维视图', fold: 'shut' },
    { name: '立面 (建筑立面)', fold: 'shut' },
  ] },
  { name: '图例', icon: 'legend' },
  { name: '明细表/数量', icon: 'schedule' },
  { name: '图纸 (全部)', icon: 'sheets' },
  { name: '族', icon: 'family', fold: 'shut' },
  { name: '组', icon: 'group', fold: 'shut' },
  { name: 'Revit 链接', icon: 'link' },
];

const viewTools = ['detail', 'style', 'sun', 'shadow', 'teapot', 'cropx', 'cropb', 'lock3d', 'glasses', 'reveal', 'template', 'analysis', 'displace', 'constraint'];
const statusTools = ['pickLink', 'pickUnder', 'pickPin', 'pickFace', 'dragPick', 'gear', 'filter'];

/* ---------- parts ---------- */

const RibbonTool = ({ item }: { item: ToolItem }) => (
  <Tool $width={item.width} $off={item.off} disabled={item.off}>
    <svg width="38" height="38" viewBox="0 0 38 38" fill="none" aria-hidden="true">{tools[item.icon]}</svg>
    <ToolLabel $lines={item.label.split('\n').length}>{item.label}</ToolLabel>
    {item.menu === 'below' && <Caret />}
    {item.menu === 'side' && <SideCaret />}
  </Tool>
);

const PropRow = ({ row, id }: { row: Prop; id: string }) => (
  <tr>
    <NameCell scope="row" $off={row.off}>
      {row.kind === 'text' || row.kind === 'button' ? row.name : <label htmlFor={id}>{row.name}</label>}
    </NameCell>
    <ValueCell $off={row.off} $kind={row.kind}>
      {row.kind === 'text' && row.value}
      {row.kind === 'input' && <ScaleInput id={id} defaultValue={row.value} />}
      {row.kind === 'button' && <CellButton>{row.value}</CellButton>}
      {row.kind === 'check' && <Tick id={id} type="checkbox" disabled={row.off} />}
    </ValueCell>
    <LinkCell />
  </tr>
);

const TreeLevel = ({ items, nested }: { items: TreeItem[]; nested?: boolean }) => (
  <Branch $nested={nested}>
    {items.map(item => (
      <li key={item.name}>
        <Node>
          {item.fold && (
            <Fold aria-label={item.name}>
              <svg width="9" height="9" viewBox="0 0 9 9" aria-hidden="true">
                <path d={item.fold === 'open' ? 'M0 4.5H9' : 'M0 4.5H9M4.5 0V9'} stroke="#2f4f96" />
              </svg>
            </Fold>
          )}
          <Stub $leaf={!item.fold} $wide={nested} />
          {item.icon && <Small name={item.icon} />}
          <NodeName $picked={item.picked} $plain={nested}>{item.name}</NodeName>
        </Node>
        {item.children && <TreeLevel items={item.children} nested />}
      </li>
    ))}
  </Branch>
);

const House = () => (
  <svg width="38" height="38" viewBox="0 0 38 38" fill="none" aria-hidden="true">
    <g stroke={ink} strokeWidth="1.4" strokeLinejoin="round">
      <path d="M3 15 11 8 19 22V37L4 32Z" fill="#fff" />
      <path d="M19 22 35 15V30L19 37Z" fill="#c3c7ce" />
      <path d="M11 7 24 1 37 14 35 17 20 22Z" fill="#dcdfe3" />
      <path d="M1 16 11 7 20 21" strokeWidth="2" />
      <path d="M8 23 12 24V35L8 33Z" fill={ink} />
    </g>
  </svg>
);

const ViewCube = () => (
  <svg width="104" height="120" viewBox="1744 245 104 120" fill="none" aria-label="ViewCube">
    <ellipse cx="1810" cy="316" rx="57" ry="37" stroke="#e9f2f5" strokeWidth="13" />
    <ellipse cx="1810" cy="316" rx="64" ry="44" stroke="#c6c6ca" strokeDasharray="2 1" />
    <ellipse cx="1810" cy="316" rx="50" ry="31" stroke="#c6c6ca" strokeDasharray="2 1" />
    <ellipse cx="1810" cy="312" rx="44" ry="28" fill="url(#cubeShade)" />
    <g stroke="#a3a3a6" strokeWidth="1.2">
      <path d="M1749 343 1758 341 1762 334 1767 339 1774 338 1771 343 1775 345 1767 346 1761 351 1758 346ZM1754 338 1771 349M1754 348 1770 337M1762 334V351M1756 344H1773M1757 340 1767 342M1764 337 1760 349" />
      <path d="M1762 290 1767 287 1775 284V296L1768 293ZM1765 286 1774 295M1766 294 1775 287M1770 284V295M1763 290H1775" />
      <path d="M1844 286 1848 284V296L1844 294ZM1843 339 1848 337V348ZM1844 290H1848M1845 342H1848" />
    </g>
    <path d="M1810 254 1845 271 1843 310 1810 330 1777 310 1776 271Z" fill="url(#cubeFace)" stroke="#8b8b8e" />
    <path d="M1776 271 1810 254 1845 271 1810 291Z" fill="#f6f6f6" stroke="#8b8b8e" />
    <path d="M1810 291V330" stroke="#77777a" strokeWidth="1.5" />
    <g fill="#8c8f96">
      <text fontSize="20" transform="matrix(.86 .5 0 1 1783 303)">前</text>
      <text fontSize="20" transform="matrix(.86 -.5 0 1 1818 313)">右</text>
      <text fontSize="22" transform="matrix(.86 .45 -.86 .45 1793 268)">上</text>
    </g>
  </svg>
);

export default function App() {
  return (
    <Shell>
      <GlobalStyle />
      <Defs />
      <TabBar>
        <Tab $kind="file">文件</Tab>
        {tabs.map((t, i) => <Tab key={t} $kind={i === 0 ? 'active' : undefined}>{t}</Tab>)}
        <TabToggle aria-label="最小化">
          <svg width="19" height="12" viewBox="0 0 19 12" fill="none">
            <rect x="1" y="1" width="17" height="10" rx="3" fill="#f2f2f4" stroke={ink} strokeWidth="1.4" />
            <path d="M6 8 9.5 4 13 8Z" fill="#333" />
          </svg>
          <Caret />
        </TabToggle>
      </TabBar>

      <Ribbon>
        <Panel $width={62}>
          <Tools>
            <ModifyTool $width={47}>
              <svg width="38" height="38" viewBox="0 0 38 38" fill="none" aria-hidden="true">{tools.modify}</svg>
              <ToolLabel $lines={1}>修改</ToolLabel>
            </ModifyTool>
          </Tools>
          <PanelTitle $start>选择<Caret $size={5} /></PanelTitle>
        </Panel>
        {panels.map(p => (
          <Panel key={p.title} $width={p.width}>
            <Tools>{p.items.map(i => <RibbonTool key={i.icon} item={i} />)}</Tools>
            <PanelTitle>{p.title}{p.menu && <Caret $size={5} />}</PanelTitle>
          </Panel>
        ))}
      </Ribbon>

      <Work>
        <Dock $width={344} $gap={4}>
          <DockTitle>属性<button aria-label="关闭属性"><Cross /></button></DockTitle>
          <DockBody>
            <TypeRow>
              <TypeThumb><House /></TypeThumb>
              三维视图
              <Grow />
              <Caret $size={5} />
            </TypeRow>
            <InstanceRow>
              <Picker $width={246} $height={28} $tone="gray">
                <select aria-label="视图"><option>三维视图: {'{三维}'}</option></select>
                <Chevron />
              </Picker>
              <EditType>
                <svg width="17" height="17" viewBox="0 0 17 17" fill="none" aria-hidden="true">
                  <path d="M1 3 3 1H7V7H1ZM9 3 11 1H15V7H9ZM1 9H7V15H1Z" stroke={ink} fill="#fff" />
                  <path d="M9 8H16V16H9Z" fill="#d9ebf9" stroke={ink} />
                  <path d="M10 10H15" stroke={blue} strokeWidth="2" />
                  <path d="M11 13H14M11 15H14" stroke={blue} strokeDasharray="1 1" />
                </svg>
                编辑类型
              </EditType>
            </InstanceRow>
            <GridArea>
              <TableClip>
                <PropTable>
                  <colgroup><col width="154" /><col width="151" /><col width="15" /></colgroup>
                  {groups.map((g, gi) => (
                    <tbody key={g.title}>
                      <tr>
                        <GroupHead colSpan={3} scope="rowgroup">
                          <div>
                            {g.title}
                            <button aria-label={`折叠${g.title}`}>
                              <svg width="9" height="14" viewBox="0 0 9 14" fill="none">
                                <path d="M2 5 4.5 2 7 5M2 9 4.5 6 7 9" stroke="#111" strokeWidth="1.4" />
                              </svg>
                            </button>
                          </div>
                        </GroupHead>
                      </tr>
                      {g.rows.map((r, ri) => <PropRow key={r.name} row={r} id={`prop-${gi}-${ri}`} />)}
                    </tbody>
                  ))}
                </PropTable>
              </TableClip>
              <Scroll>
                <ScrollButton aria-label="向上"><Chevron up /></ScrollButton>
                <ScrollTrack />
                <ScrollButton aria-label="向下"><Chevron up={false} /></ScrollButton>
              </Scroll>
            </GridArea>
            <DockFoot>
              <a href="#help">属性帮助</a>
              <Apply disabled>应用</Apply>
            </DockFoot>
          </DockBody>
        </Dock>

        <Dock $width={212} $gap={5}>
          <DockTitle>项目浏览器 - 项目4<button aria-label="关闭项目浏览器"><Cross /></button></DockTitle>
          <DockBody $white>
            <BrowserTree><TreeLevel items={tree} /></BrowserTree>
          </DockBody>
        </Dock>

        <View>
          <Canvas>
            <svg viewBox="569 173 1279 817" fill="none" aria-label="三维视图">
              <path d="M931.5 704A302.5 302.5 0 0 1 1536.5 704A302.5 175.5 0 0 1 931.5 704Z" stroke="#000" shapeRendering="crispEdges" />
            </svg>
          </Canvas>
          <CubeSpot><ViewCube /></CubeSpot>
          <ViewBar>
            <ScaleText>1 : 100</ScaleText>
            <ViewTools>
              {viewTools.map(n => <IconButton key={n} aria-label={n}><Small name={n} /></IconButton>)}
              <IconButton $slim aria-label="收起">
                <svg width="8" height="12" viewBox="0 0 8 12" fill="none"><path d="M7 2 2 6 7 10" stroke="#444" strokeWidth="1.8" /></svg>
              </IconButton>
            </ViewTools>
            <HScroll />
          </ViewBar>
        </View>
      </Work>

      <Status>
        <Hint>单击可进行选择; 按 Tab 键并单击可选择其他项目; 按 Ctrl 键并单击可将新项目添加到选择集; 按 Shift 键并单击可</Hint>
        <StatusGroup $before={0} $after={8}>
          <IconButton aria-label="工作集"><Small name="worksets" /></IconButton>
        </StatusGroup>
        <Picker $width={256} $height={23} $tone="white">
          <select aria-label="活动工作集" disabled><option></option></select>
          <Chevron color="#b0b0b4" />
        </Picker>
        <StatusGroup $before={6} $after={4}>
          <IconButton aria-label="编辑请求"><Small name="editable" /></IconButton>
        </StatusGroup>
        <Count>:0</Count>
        <StatusGroup $before={16} $after={8}>
          <IconButton aria-label="设计选项"><Small name="options" /></IconButton>
          <IconButton aria-label="添加到集"><Small name="addset" /></IconButton>
        </StatusGroup>
        <Picker $width={256} $height={23} $tone="white">
          <select aria-label="设计选项" disabled><option>主模型</option></select>
          <Chevron color="#b0b0b4" />
        </Picker>
        <StatusTools>
          {statusTools.map(n => <IconButton key={n} aria-label={n}><Small name={n} /></IconButton>)}
        </StatusTools>
        <Count $edge>:0</Count>
      </Status>
    </Shell>
  );
}
